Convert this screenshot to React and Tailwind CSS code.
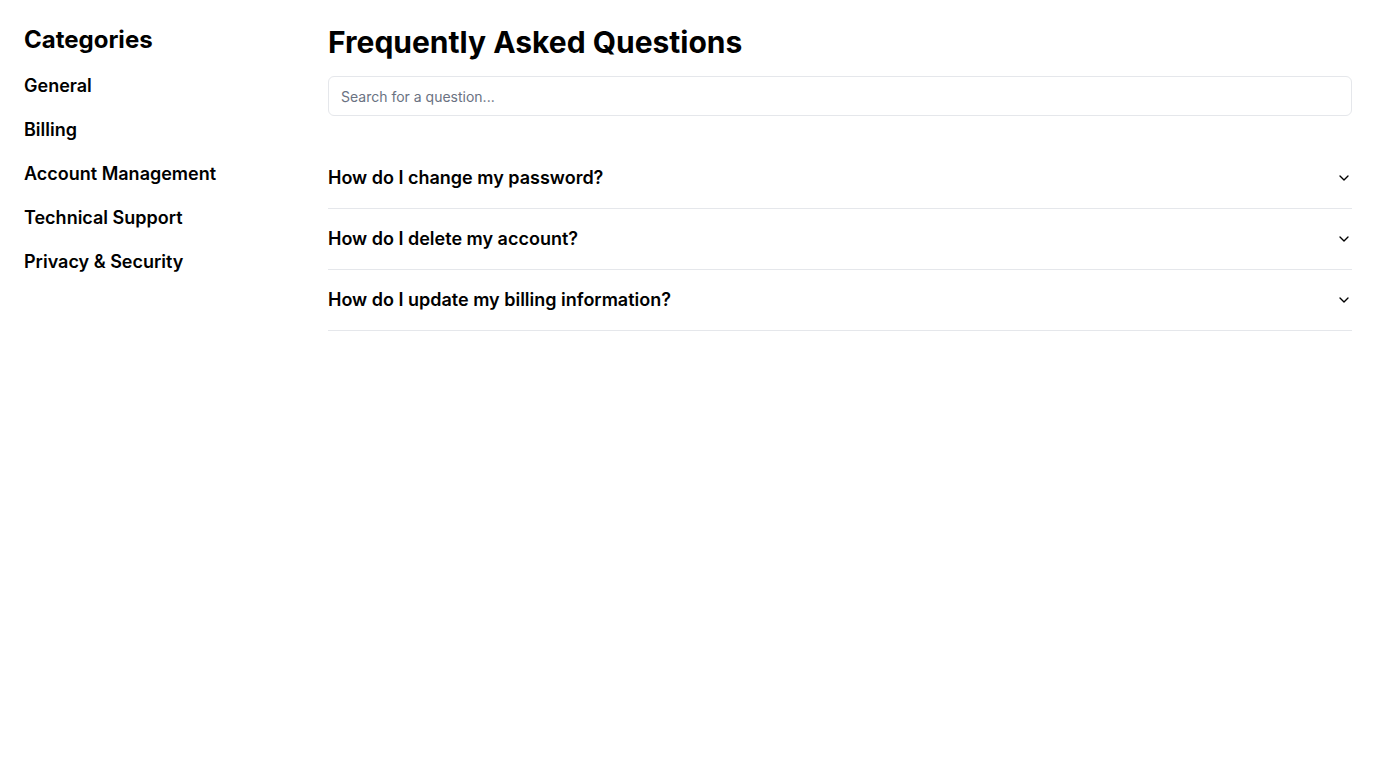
import React from 'react';
import { ChevronDown } from 'lucide-react';

const categories = ['General', 'Billing', 'Account Management', 'Technical Support', 'Privacy & Security'];

const questions = [
  'How do I change my password?',
  'How do I delete my account?',
  'How do I update my billing information?',
];

export default function App() {
  return (
    <div className="min-h-screen bg-white text-black flex" style={{ fontFamily: 'Inter, "Noto Sans", sans-serif' }}>
      {/* Sidebar */}
      <aside className="w-64 shrink-0 p-6 box-content">
        <h2 className="text-2xl font-bold mb-4">Categories</h2>
        <ul className="space-y-4">
          {categories.map((c) => (
            <li key={c} className="text-lg font-semibold cursor-pointer">
              {c}
            </li>
          ))}
        </ul>
      </aside>

      {/* Main */}
      <main className="flex-1 p-6">
        <h1 className="text-3xl font-bold mb-4">Frequently Asked Questions</h1>
        <input
          type="text"
          placeholder="Search for a question..."
          className="w-full h-10 rounded-md border border-gray-200 px-3 text-sm placeholder:text-gray-500 mb-8 outline-none"
        />
        <div>
          {questions.map((q) => (
            <div key={q} className="border-b border-gray-200">
              <button className="w-full flex items-center justify-between py-4 text-left text-lg font-semibold">
                <span>{q}</span>
                <ChevronDown className="h-4 w-4 shrink-0" />
              </button>
            </div>
          ))}
        </div>
      </main>
    </div>
  );
}
